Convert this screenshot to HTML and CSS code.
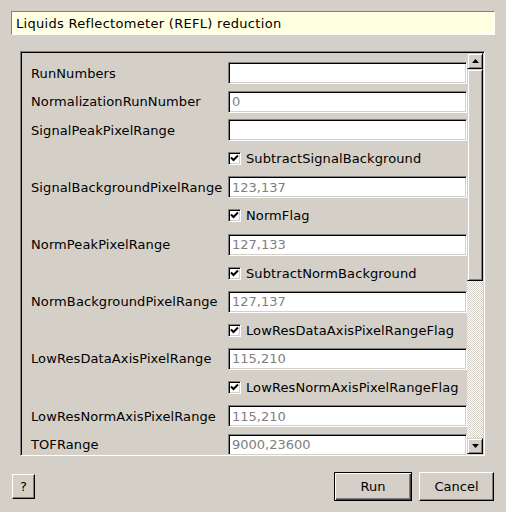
FILE: index.html
```html
<!DOCTYPE html>
<html>
<head>
<meta charset="utf-8">
<link rel="stylesheet" href="styles.css">
</head>
<body>
<div class="dialog">
  <div class="title">Liquids Reflectometer (REFL) reduction</div>
  <div class="frame">
    <div class="viewport">
      <div class="form">
        <div class="label">RunNumbers</div><div class="field"><div class="input"></div></div>
        <div class="label">NormalizationRunNumber</div><div class="field"><div class="input">0</div></div>
        <div class="label">SignalPeakPixelRange</div><div class="field"><div class="input"></div></div>
        <div class="label"></div><div class="field"><div class="check"><span class="box"><svg width="9" height="9" viewBox="0 0 9 9"><path d="M1 3.5 L3.5 6 L8 1.5" fill="none" stroke="#000" stroke-width="2"/></svg></span>SubtractSignalBackground</div></div>
        <div class="label">SignalBackgroundPixelRange</div><div class="field"><div class="input">123,137</div></div>
        <div class="label"></div><div class="field"><div class="check"><span class="box"><svg width="9" height="9" viewBox="0 0 9 9"><path d="M1 3.5 L3.5 6 L8 1.5" fill="none" stroke="#000" stroke-width="2"/></svg></span>NormFlag</div></div>
        <div class="label">NormPeakPixelRange</div><div class="field"><div class="input">127,133</div></div>
        <div class="label"></div><div class="field"><div class="check"><span class="box"><svg width="9" height="9" viewBox="0 0 9 9"><path d="M1 3.5 L3.5 6 L8 1.5" fill="none" stroke="#000" stroke-width="2"/></svg></span>SubtractNormBackground</div></div>
        <div class="label">NormBackgroundPixelRange</div><div class="field"><div class="input">127,137</div></div>
        <div class="label"></div><div class="field"><div class="check"><span class="box"><svg width="9" height="9" viewBox="0 0 9 9"><path d="M1 3.5 L3.5 6 L8 1.5" fill="none" stroke="#000" stroke-width="2"/></svg></span>LowResDataAxisPixelRangeFlag</div></div>
        <div class="label">LowResDataAxisPixelRange</div><div class="field"><div class="input">115,210</div></div>
        <div class="label"></div><div class="field"><div class="check"><span class="box"><svg width="9" height="9" viewBox="0 0 9 9"><path d="M1 3.5 L3.5 6 L8 1.5" fill="none" stroke="#000" stroke-width="2"/></svg></span>LowResNormAxisPixelRangeFlag</div></div>
        <div class="label">LowResNormAxisPixelRange</div><div class="field"><div class="input">115,210</div></div>
        <div class="label">TOFRange</div><div class="field"><div class="input">9000,23600</div></div>
      </div>
    </div>
    <div class="scrollbar">
      <div class="sb-btn"><svg width="7" height="4" viewBox="0 0 7 4"><path d="M3.5 0 L7 4 L0 4 Z" fill="#000"/></svg></div>
      <div class="thumb"></div>
      <div class="track"></div>
      <div class="sb-btn"><svg width="7" height="4" viewBox="0 0 7 4"><path d="M0 0 L7 0 L3.5 4 Z" fill="#000"/></svg></div>
    </div>
  </div>
  <div class="buttons">
    <div class="btn help">?</div>
    <div class="spacer"></div>
    <div class="btn default">Run</div>
    <div class="btn">Cancel</div>
  </div>
</div>
</body>
</html>
```

FILE: styles.css
```css
html, body {
  margin: 0;
  padding: 0;
  background: #d4d0c8;
}
body {
  font-family: "DejaVu Sans", sans-serif;
  font-size: 13px;
  color: #000;
}
.dialog {
  width: 506px;
  height: 512px;
  box-sizing: border-box;
  padding: 11px 11px 0 11px;
  display: flex;
  flex-direction: column;
}
.title {
  height: 24px;
  box-sizing: border-box;
  background: #ffffe1;
  border: 1px solid;
  border-color: #808080 #fff #fff #808080;
  padding-left: 4px;
  display: flex;
  align-items: center;
  letter-spacing: 0.3px;
}
.frame {
  margin: 16px 10px 0 9px;
  height: 405px;
  box-sizing: border-box;
  border: 1px solid;
  border-color: #808080 #fff #fff #808080;
  box-shadow: inset 1px 1px #000, inset -1px -1px #d4d0c8;
  padding: 1px;
  display: flex;
}
.viewport {
  flex: 1;
  overflow: hidden;
}
.form {
  display: grid;
  grid-template-columns: 197px 1fr;
  grid-auto-rows: 22px;
  row-gap: 6.6px;
  padding: 9px 0 0 9px;
}
.label {
  display: flex;
  align-items: center;
  white-space: nowrap;
  letter-spacing: 0.1px;
}
.field {
  display: flex;
  align-items: center;
}
.input {
  flex: 1;
  height: 22px;
  box-sizing: border-box;
  background: #fff;
  border: 1px solid;
  border-color: #808080 #fff #fff #808080;
  box-shadow: inset 1px 1px #000, inset -1px -1px #d4d0c8;
  color: #808080;
  padding-left: 3px;
  display: flex;
  align-items: center;
}
.check {
  display: flex;
  align-items: center;
  gap: 5px;
  letter-spacing: 0.1px;
}
.box {
  width: 13px;
  height: 13px;
  box-sizing: border-box;
  background: #fff;
  border: 1px solid;
  border-color: #808080 #fff #fff #808080;
  box-shadow: inset 1px 1px #000, inset -1px -1px #d4d0c8;
  display: flex;
  align-items: center;
  justify-content: center;
}
.box svg { display: block; }
.scrollbar {
  width: 16px;
  display: flex;
  flex-direction: column;
}
.sb-btn, .thumb {
  box-sizing: border-box;
  background: #d4d0c8;
  border: 1px solid;
  border-color: #d4d0c8 #000 #000 #d4d0c8;
  box-shadow: inset 1px 1px #fff, inset -1px -1px #808080;
}
.sb-btn {
  height: 16px;
  display: flex;
  align-items: center;
  justify-content: center;
}
.sb-btn svg { display: block; }
.thumb {
  height: 212px;
}
.track {
  flex: 1;
  background: repeating-conic-gradient(#fff 0 25%, #d4d0c8 0 50%) 0 0 / 2px 2px;
}
.buttons {
  margin-top: 16px;
  display: flex;
  align-items: center;
  gap: 7px;
  padding-right: 1px;
}
.spacer { flex: 1; }
.btn {
  box-sizing: border-box;
  height: 29px;
  min-width: 75px;
  padding: 0 10px;
  border: 1px solid;
  border-color: #fff #000 #000 #fff;
  box-shadow: inset -1px -1px #808080, inset 1px 1px #d4d0c8;
  display: flex;
  align-items: center;
  justify-content: center;
}
.btn.help {
  min-width: 0;
  width: 23px;
  height: 25px;
  padding: 0;
  margin-left: 1px;
}
.btn.default {
  border-color: #000;
  box-shadow: inset 1px 1px #fff, inset -1px -1px #404040, inset -2px -2px #808080;
  min-width: 78px;
}
```
